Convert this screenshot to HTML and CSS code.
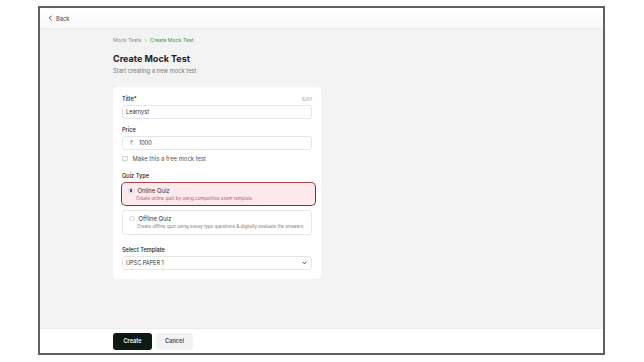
FILE: index.html
```html
<!DOCTYPE html>
<html lang="en">
<head>
  <meta charset="UTF-8">
  <title>Create Mock Test</title>
  <link rel="stylesheet" href="styles.css">
</head>
<body>

  <div class="ventana">
    <!-- BARRA SUPERIOR -->
    <div class="barra-top">
      <a class="volver" href="#">
        <svg width="5" height="6" viewBox="0 0 5 6"><path d="M3.5 0.8 L1.3 3 L3.5 5.2" fill="none" stroke="#444" stroke-width="0.9"/></svg>
        Back
      </a>
    </div>

    <!-- CONTENIDO -->
    <div class="contenido">
      <div class="migas">Mock Tests <span class="sep">›</span> <span class="actual">Create Mock Test</span></div>
      <h1>Create Mock Test</h1>
      <p class="subtitulo">Start creating a new mock test</p>

      <form class="tarjeta">
        <div class="fila-label">
          <label for="titulo">Title*</label>
          <span class="contador">6/60</span>
        </div>
        <div class="campo">Learnyst</div>

        <label for="precio" class="separado">Price</label>
        <div class="campo"><span class="rupia">₹</span>1000</div>

        <div class="check">
          <span class="caja"></span>
          Make this a free mock test
        </div>

        <label class="separado-grande">Quiz Type</label>
        <div class="opcion activa">
          <div class="opcion-titulo"><span class="radio marcado"></span>Online Quiz</div>
          <div class="opcion-desc">Create online quiz by using competitive exam template</div>
        </div>
        <div class="opcion">
          <div class="opcion-titulo"><span class="radio"></span>Offline Quiz</div>
          <div class="opcion-desc">Create offline quiz using essay type questions &amp; digitally evaluate the answers</div>
        </div>

        <label class="separado-plantilla">Select Template</label>
        <div class="campo select">
          UPSC PAPER 1
          <svg width="5" height="4" viewBox="0 0 5 4"><path d="M0.8 1 L2.5 2.8 L4.2 1" fill="none" stroke="#333" stroke-width="0.9"/></svg>
        </div>
      </form>
    </div>

    <!-- PIE -->
    <div class="pie">
      <button type="button" class="btn-crear">Create</button>
      <button type="button" class="btn-cancelar">Cancel</button>
    </div>
  </div>

</body>
</html>
```

FILE: styles.css
```css
body {
  margin: 0;
  background: white;
  font-family: Inter, "Noto Sans", sans-serif;
  color: #222;
}
.ventana {
  margin: 6px 0 0 38px;
  width: 563px;
  height: 345px;
  border: 2px solid #606060;
  display: flex;
  flex-direction: column;
  background: white;
}
.barra-top {
  height: 21px;
  flex-shrink: 0;
  display: flex;
  align-items: center;
  padding-left: 8px;
  background: linear-gradient(#ffffff, #f9f9f9);
  border-bottom: 1px solid #ededed;
  box-sizing: border-box;
}
.volver {
  display: flex;
  align-items: center;
  gap: 3px;
  font-size: 5.8px;
  color: #444;
  text-decoration: none;
}
.contenido {
  flex: 1;
  background: #f3f3f3;
  padding: 8px 0 0 73px;
}
.migas {
  font-size: 5.2px;
  line-height: 7px;
  color: #8a8a8a;
}
.migas .sep {
  margin: 0 2px;
}
.migas .actual {
  color: #2f9a4e;
}
h1 {
  font-size: 9px;
  line-height: 12px;
  margin: 9px 0 0;
  font-weight: 700;
  color: #222;
}
.subtitulo {
  font-size: 5.8px;
  line-height: 7px;
  margin: 2px 0 0;
  color: #777;
}
.tarjeta {
  width: 190px;
  margin-top: 13px;
  background: white;
  border-radius: 4px;
  padding: 9px 9px 9px 9px;
  font-size: 5.5px;
}
.fila-label {
  display: flex;
  justify-content: space-between;
  align-items: center;
  line-height: 7px;
}
label {
  display: block;
  font-size: 5.6px;
  line-height: 7px;
  font-weight: 500;
  color: #222;
}
.contador {
  font-size: 4.5px;
  color: #999;
}
.campo {
  height: 14px;
  margin-top: 2px;
  border: 1px solid #e6e6e6;
  border-radius: 3px;
  box-sizing: border-box;
  display: flex;
  align-items: center;
  padding: 0 4px 0 3px;
  font-size: 5.6px;
  color: #333;
}
.rupia {
  color: #999;
  margin: 0 6px 0 4px;
}
.separado {
  margin-top: 8px;
}
.separado-grande {
  margin-top: 11px;
}
.separado-plantilla {
  margin-top: 12px;
}
.check {
  display: flex;
  align-items: center;
  gap: 5px;
  margin-top: 5px;
  font-size: 5.9px;
  color: #555;
  line-height: 7px;
}
.caja {
  width: 3.5px;
  height: 3.5px;
  border: 0.6px solid #d0d0d0;
  border-radius: 1px;
}
.opcion {
  margin-top: 4px;
  height: 25px;
  border: 1px solid #e6e6e6;
  border-radius: 3px;
  box-sizing: border-box;
  padding: 4px 6px 0;
}
.opcion.activa {
  margin: 2px -4px 0 -1px;
  height: 24px;
  background: #fde9ec;
  border: 1.4px solid #6d3a33;
  border-top-color: #a8404a;
  border-radius: 5px;
}
.opcion-titulo {
  display: flex;
  align-items: center;
  gap: 4px;
  font-size: 5.9px;
  line-height: 7px;
  color: #333;
}
.opcion-desc {
  margin: 2px 0 0 8px;
  font-size: 4.5px;
  line-height: 6px;
  color: #777;
}
.opcion.activa .opcion-desc {
  color: #c0525f;
}
.radio {
  width: 3.5px;
  height: 3.5px;
  border: 0.6px solid #d0d0d0;
  border-radius: 50%;
  box-sizing: content-box;
}
.radio.marcado {
  background: radial-gradient(circle, #555 45%, white 55%);
}
.select {
  justify-content: space-between;
  font-size: 5.5px;
}
.pie {
  height: 25px;
  flex-shrink: 0;
  border-top: 1px solid #ececec;
  display: flex;
  align-items: center;
  gap: 4px;
  padding-left: 73px;
  box-sizing: border-box;
}
.pie button {
  height: 17px;
  border: none;
  border-radius: 3px;
  font-family: Inter, "Noto Sans", sans-serif;
  font-size: 5.6px;
  font-weight: 600;
  cursor: pointer;
}
.btn-crear {
  width: 39px;
  background-color: #0c1a12;
  color: white;
}
.btn-cancelar {
  width: 37px;
  background-color: #f2f2f2;
  color: #444;
}
```
